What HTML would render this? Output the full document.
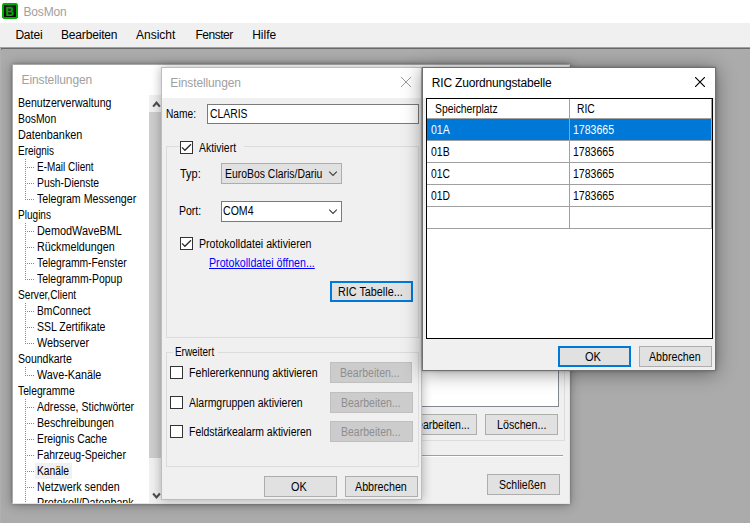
<!DOCTYPE html>
<html lang="de">
<head>
<meta charset="utf-8">
<title>BosMon</title>
<style>
html,body{margin:0;padding:0;background:#fff;}
#root{position:relative;width:750px;height:523px;overflow:hidden;background:#ababab;font-family:"Liberation Sans",sans-serif;}
#root div,#root span,#root svg{position:absolute;box-sizing:border-box;}
.t{white-space:pre;color:#000;}
.s11{font-size:12px;line-height:14px;transform-origin:0 0;}
.s12{font-size:12px;line-height:14px;}
.btn{background:#e1e1e1;border:1px solid #adadad;}
.btn.def{border:2px solid #0078d7;}
.btn.dis{background:#cccccc;border:1px solid #bfbfbf;}
.grp{border:1px solid #dcdcdc;}
.cb{width:13px;height:13px;background:#fff;border:1px solid #333;}
.hl{background:#a0a0a0;height:1px;}
.vl{background:#a0a0a0;width:1px;}
.dot-v{width:1px;background-image:repeating-linear-gradient(to bottom,#8a8a8a 0,#8a8a8a 1px,transparent 1px,transparent 2px);}
.dot-h{height:1px;background-image:repeating-linear-gradient(to right,#8a8a8a 0,#8a8a8a 1px,transparent 1px,transparent 2px);}
</style>
</head>
<body>
<div id="root">
  <!-- main window title bar + menu -->
  <div id="titlebar" style="left:0;top:0;width:750px;height:23px;background:#fff;"></div>
  <svg id="appicon" style="left:2px;top:3px;" width="16" height="16" viewBox="0 0 16 16">
    <defs><radialGradient id="ig" cx="50%" cy="25%" r="70%"><stop offset="0" stop-color="#3c2c3c"/><stop offset="1" stop-color="#0c060c"/></radialGradient></defs>
    <path d="M1.5 0 H14.5 L16 1.5 V14.5 L14.5 16 H1.5 L0 14.5 V1.5 Z" fill="#00ae00"/>
    <rect x="2" y="2" width="12" height="12" fill="url(#ig)"/>
    <text x="7.8" y="12.6" text-anchor="middle" font-family="Liberation Sans, sans-serif" font-weight="bold" font-size="12" fill="#00a800">B</text>
  </svg>
  <div id="menubar" style="left:0;top:23px;width:750px;height:24px;background:#f0f0f0;"></div>
  <div id="mdi" style="left:0;top:47px;width:750px;height:476px;background:#ababab;border-top:1px solid #a0a0a0;border-left:1px solid #b0b0b0;">
    <div style="left:0;top:0;width:749px;height:1px;background:#696969;"></div>
    <div style="left:0;top:1px;width:1px;height:1px;background:#808080;"></div>
  </div>

  <!-- left window -->
  <div id="winL" style="left:12px;top:64px;width:558px;height:440px;background:#fff;box-shadow:0 0 3px rgba(0,0,0,.25),0 1px 11px rgba(0,0,0,.33);border:1px solid #e4e4e4;border-top-color:#a8a8a8;border-left-color:#a8a8a8;"></div>
  <div id="winLbody" style="left:162px;top:94px;width:407px;height:409px;background:#f0f0f0;"></div>
  <div id="tree" style="left:13px;top:94px;width:136px;height:409px;overflow:hidden;background:#fff;">
    <div style="left:0;top:0;width:136px;height:430px;" id="treeinner"></div>
  </div>
  <!-- tree selection highlight -->
  <div id="treesel" style="left:35px;top:463px;width:37px;height:16px;background:#f0f0f0;"></div>
  <!-- tree dotted lines -->
  <!-- scrollbar -->
  <div id="sb" style="left:149px;top:95px;width:13px;height:408px;background:#f0f0f0;"></div>
  <div id="sbthumb" style="left:149px;top:112px;width:13px;height:346px;background:#cdcdcd;"></div>
  <svg style="left:149px;top:95px;" width="13" height="17" viewBox="0 0 13 17"><path d="M4.1 11.6 L7.5 7.7 L10.9 11.6" fill="none" stroke="#4d4d4d" stroke-width="2.1"/></svg>
  <svg style="left:149px;top:487px;" width="13" height="17" viewBox="0 0 13 17"><path d="M4.1 6.5 L7.5 10.4 L10.9 6.5" fill="none" stroke="#4d4d4d" stroke-width="2.1"/></svg>
  <!-- left window right content -->
  <div class="grp" style="left:400px;top:300px;width:165px;height:141px;"></div>
  <div style="left:400px;top:300px;width:159px;height:107px;background:#fff;border:1px solid #828790;"></div>
  <div class="btn" style="left:404px;top:414px;width:73px;height:21px;"></div>
  <div class="btn" style="left:485px;top:414px;width:73px;height:21px;"></div>
  <div style="left:400px;top:455px;width:163px;height:1px;background:#a0a0a0;"></div>
  <div style="left:400px;top:456px;width:163px;height:1px;background:#fff;"></div>
  <div class="btn" style="left:487px;top:474px;width:73px;height:21px;"></div>

<span class="t s12" style="left:21.50px;top:73px;letter-spacing:-0.115px;color:#a0a0a0;">Einstellungen</span>
<span class="t s11" style="left:410.30px;top:418px;transform:scaleX(0.8773);">Bearbeiten...</span>
<span class="t s11" style="left:496.50px;top:418px;transform:scaleX(0.8939);">Löschen...</span>
<span class="t s11" style="left:499.40px;top:478px;transform:scaleX(0.8769);">Schließen</span>
<div id="treetext" style="left:0;top:94px;width:149px;height:409px;overflow:hidden;">
<div style="left:0;top:-94px;width:149px;height:523px;">
<div class="dot-v" style="left:25px;top:159px;height:41px;"></div>
<div class="dot-h" style="left:25px;top:167px;width:9px;"></div>
<div class="dot-h" style="left:25px;top:183px;width:9px;"></div>
<div class="dot-h" style="left:25px;top:199px;width:9px;"></div>
<div class="dot-v" style="left:25px;top:223px;height:57px;"></div>
<div class="dot-h" style="left:25px;top:231px;width:9px;"></div>
<div class="dot-h" style="left:25px;top:247px;width:9px;"></div>
<div class="dot-h" style="left:25px;top:263px;width:9px;"></div>
<div class="dot-h" style="left:25px;top:279px;width:9px;"></div>
<div class="dot-v" style="left:25px;top:303px;height:41px;"></div>
<div class="dot-h" style="left:25px;top:311px;width:9px;"></div>
<div class="dot-h" style="left:25px;top:327px;width:9px;"></div>
<div class="dot-h" style="left:25px;top:343px;width:9px;"></div>
<div class="dot-v" style="left:25px;top:367px;height:9px;"></div>
<div class="dot-h" style="left:25px;top:375px;width:9px;"></div>
<div class="dot-v" style="left:25px;top:399px;height:121px;"></div>
<div class="dot-h" style="left:25px;top:407px;width:9px;"></div>
<div class="dot-h" style="left:25px;top:423px;width:9px;"></div>
<div class="dot-h" style="left:25px;top:439px;width:9px;"></div>
<div class="dot-h" style="left:25px;top:455px;width:9px;"></div>
<div class="dot-h" style="left:25px;top:471px;width:9px;"></div>
<div class="dot-h" style="left:25px;top:487px;width:9px;"></div>
<div class="dot-h" style="left:25px;top:503px;width:9px;"></div>
<div class="dot-h" style="left:25px;top:519px;width:9px;"></div>
<span class="t s11" style="left:18.20px;top:96px;transform:scaleX(0.8806);">Benutzerverwaltung</span>
<span class="t s11" style="left:18.20px;top:112px;transform:scaleX(0.8674);">BosMon</span>
<span class="t s11" style="left:18.20px;top:128px;transform:scaleX(0.9008);">Datenbanken</span>
<span class="t s11" style="left:18.20px;top:144px;transform:scaleX(0.8304);">Ereignis</span>
<span class="t s11" style="left:36.70px;top:160px;transform:scaleX(0.8314);">E-Mail Client</span>
<span class="t s11" style="left:36.70px;top:176px;transform:scaleX(0.8610);">Push-Dienste</span>
<span class="t s11" style="left:36.70px;top:192px;transform:scaleX(0.8853);">Telegram Messenger</span>
<span class="t s11" style="left:18.20px;top:208px;transform:scaleX(0.8385);">Plugins</span>
<span class="t s11" style="left:36.70px;top:224px;transform:scaleX(0.9062);">DemodWaveBML</span>
<span class="t s11" style="left:36.70px;top:240px;transform:scaleX(0.8960);">Rückmeldungen</span>
<span class="t s11" style="left:36.70px;top:256px;transform:scaleX(0.8613);">Telegramm-Fenster</span>
<span class="t s11" style="left:36.70px;top:272px;transform:scaleX(0.8692);">Telegramm-Popup</span>
<span class="t s11" style="left:18.20px;top:288px;transform:scaleX(0.8463);">Server,Client</span>
<span class="t s11" style="left:36.70px;top:304px;transform:scaleX(0.8570);">BmConnect</span>
<span class="t s11" style="left:36.70px;top:320px;transform:scaleX(0.8744);">SSL Zertifikate</span>
<span class="t s11" style="left:36.70px;top:336px;transform:scaleX(0.9014);">Webserver</span>
<span class="t s11" style="left:18.20px;top:352px;transform:scaleX(0.8784);">Soundkarte</span>
<span class="t s11" style="left:36.70px;top:368px;transform:scaleX(0.8983);">Wave-Kanäle</span>
<span class="t s11" style="left:18.20px;top:384px;transform:scaleX(0.8576);">Telegramme</span>
<span class="t s11" style="left:36.70px;top:400px;transform:scaleX(0.8771);">Adresse, Stichwörter</span>
<span class="t s11" style="left:36.70px;top:416px;transform:scaleX(0.8878);">Beschreibungen</span>
<span class="t s11" style="left:36.70px;top:432px;transform:scaleX(0.8605);">Ereignis Cache</span>
<span class="t s11" style="left:36.70px;top:448px;transform:scaleX(0.8711);">Fahrzeug-Speicher</span>
<span class="t s11" style="left:36.70px;top:464px;transform:scaleX(0.8570);">Kanäle</span>
<span class="t s11" style="left:36.70px;top:480px;transform:scaleX(0.8920);">Netzwerk senden</span>
<span class="t s11" style="left:36.70px;top:496px;transform:scaleX(0.8949);">Protokoll/Datenbank</span>
</div>
</div>

  <!-- middle dialog -->
  <div id="winM" style="left:161px;top:67px;width:261px;height:433px;background:#f0f0f0;box-shadow:0 0 10px rgba(0,0,0,.3);border:1px solid #bdbdbd;"></div>
  <div id="winMtitle" style="left:162px;top:68px;width:259px;height:30px;background:#fff;"></div>
  <svg style="left:401px;top:77px;" width="10" height="10" viewBox="0 0 10 10"><path d="M0 0 L10 10 M10 0 L0 10" stroke="#999" stroke-width="1" fill="none"/></svg>
  <div style="left:207px;top:104px;width:212px;height:20px;background:#fff;border:1px solid #7a7a7a;"></div>
  <div class="grp" style="left:166px;top:146px;width:253px;height:192px;"></div>
  <div style="left:180px;top:140px;width:64px;height:14px;background:#f0f0f0;"></div>
  <div class="cb" style="left:180px;top:141px;"></div>
  <svg style="left:180px;top:141px;" width="13" height="13" viewBox="0 0 13 13"><path d="M2 6.4 L4.9 9.3 L11 3.2" fill="none" stroke="#2a2a2a" stroke-width="1.25"/></svg>
  <div class="btn" style="left:221px;top:163px;width:121px;height:21px;"></div>
  <svg style="left:328px;top:170px;" width="10" height="8" viewBox="0 0 10 8"><path d="M1.2 1.7 L5 5.5 L8.8 1.7" fill="none" stroke="#3c3c3c" stroke-width="1.1"/></svg>
  <div style="left:221px;top:201px;width:121px;height:21px;background:#fff;border:1px solid #7a7a7a;"></div>
  <svg style="left:328px;top:208px;" width="10" height="8" viewBox="0 0 10 8"><path d="M1.2 1.7 L5 5.5 L8.8 1.7" fill="none" stroke="#3c3c3c" stroke-width="1.1"/></svg>
  <div class="cb" style="left:180px;top:237px;"></div>
  <svg style="left:180px;top:237px;" width="13" height="13" viewBox="0 0 13 13"><path d="M2 6.4 L4.9 9.3 L11 3.2" fill="none" stroke="#2a2a2a" stroke-width="1.25"/></svg>
  <div class="btn def" style="left:330px;top:281px;width:83px;height:21px;"></div>
  <div class="grp" style="left:166px;top:352px;width:253px;height:115px;"></div>
  <div style="left:173px;top:346px;width:45px;height:12px;background:#f0f0f0;"></div>
  <div class="cb" style="left:170px;top:366px;"></div>
  <div class="cb" style="left:170px;top:396px;"></div>
  <div class="cb" style="left:170px;top:425px;"></div>
  <div class="btn dis" style="left:330px;top:362px;width:82px;height:21px;"></div>
  <div class="btn dis" style="left:330px;top:392px;width:83px;height:21px;"></div>
  <div class="btn dis" style="left:330px;top:421px;width:83px;height:21px;"></div>
  <div class="btn" style="left:264px;top:476px;width:73px;height:21px;"></div>
  <div class="btn" style="left:345px;top:476px;width:73px;height:21px;"></div>

  <!-- RIC dialog -->
  <div id="winR" style="left:422px;top:67px;width:294px;height:304px;background:#f0f0f0;box-shadow:0 2px 18px rgba(0,0,0,.42),0 0 3px rgba(0,0,0,.25);border:1px solid #707070;"></div>
  <div id="winRtitle" style="left:423px;top:68px;width:292px;height:30px;background:#fff;"></div>
  <svg style="left:695px;top:77px;" width="10" height="10" viewBox="0 0 10 10"><path d="M0 0 L10 10 M10 0 L0 10" stroke="#000" stroke-width="1.15" fill="none"/></svg>
  <div id="grid" style="left:426px;top:98px;width:287px;height:241px;background:#fff;border:1px solid #000;"></div>
  <div style="left:427px;top:119px;width:285px;height:21px;background:#0078d7;"></div>
  <div class="hl" style="left:427px;top:118px;width:285px;"></div>
  <div class="hl" style="left:427px;top:140px;width:285px;"></div>
  <div class="hl" style="left:427px;top:162px;width:285px;"></div>
  <div class="hl" style="left:427px;top:184px;width:285px;"></div>
  <div class="hl" style="left:427px;top:206px;width:285px;"></div>
  <div class="hl" style="left:427px;top:228px;width:285px;"></div>
  <div class="vl" style="left:569px;top:99px;height:130px;"></div>
  <div class="vl" style="left:711px;top:99px;height:130px;"></div>
  <div class="btn def" style="left:558px;top:346px;width:73px;height:21px;"></div>
  <div class="btn" style="left:639px;top:346px;width:73px;height:21px;"></div>

<span class="t s12" style="left:23.50px;top:5px;letter-spacing:-0.170px;color:#a0a0a0;">BosMon</span>
<span class="t s12" style="left:15.40px;top:28px;letter-spacing:-0.187px;">Datei</span>
<span class="t s12" style="left:61.00px;top:28px;letter-spacing:-0.174px;">Bearbeiten</span>
<span class="t s12" style="left:136.00px;top:28px;letter-spacing:-0.003px;">Ansicht</span>
<span class="t s12" style="left:195.40px;top:28px;letter-spacing:-0.481px;">Fenster</span>
<span class="t s12" style="left:252.20px;top:28px;letter-spacing:0.017px;">Hilfe</span>
<span class="t s12" style="left:170.30px;top:76px;letter-spacing:-0.115px;color:#a0a0a0;">Einstellungen</span>
<span class="t s11" style="left:166.30px;top:107px;transform:scaleX(0.8483);">Name:</span>
<span class="t s11" style="left:210.00px;top:107px;transform:scaleX(0.8652);">CLARIS</span>
<span class="t s11" style="left:198.70px;top:141px;transform:scaleX(0.8676);">Aktiviert</span>
<span class="t s11" style="left:180.20px;top:167px;transform:scaleX(0.9131);">Typ:</span>
<span class="t s11" style="left:225.30px;top:167px;transform:scaleX(0.8683);">EuroBos Claris/Dariu</span>
<span class="t s11" style="left:178.70px;top:204px;transform:scaleX(0.8757);">Port:</span>
<span class="t s11" style="left:223.00px;top:204px;transform:scaleX(0.8801);">COM4</span>
<span class="t s11" style="left:198.70px;top:237px;transform:scaleX(0.8830);">Protokolldatei aktivieren</span>
<span class="t s11" style="left:209.30px;top:256px;transform:scaleX(0.8876);color:#0000ff;text-decoration:underline;">Protokolldatei öffnen...</span>
<span class="t s11" style="left:337.80px;top:285px;transform:scaleX(0.9010);">RIC Tabelle...</span>
<span class="t s11" style="left:175.30px;top:345px;transform:scaleX(0.8269);">Erweitert</span>
<span class="t s11" style="left:189.00px;top:366px;transform:scaleX(0.8843);">Fehlererkennung aktivieren</span>
<span class="t s11" style="left:189.00px;top:396px;transform:scaleX(0.8733);">Alarmgruppen aktivieren</span>
<span class="t s11" style="left:189.00px;top:425px;transform:scaleX(0.8711);">Feldstärkealarm aktivieren</span>
<span class="t s11" style="left:340.30px;top:366px;transform:scaleX(0.8758);color:#8e8e8e;">Bearbeiten...</span>
<span class="t s11" style="left:341.20px;top:396px;transform:scaleX(0.8758);color:#8e8e8e;">Bearbeiten...</span>
<span class="t s11" style="left:341.20px;top:425px;transform:scaleX(0.8758);color:#8e8e8e;">Bearbeiten...</span>
<span class="t s11" style="left:291.30px;top:480px;transform:scaleX(0.9057);">OK</span>
<span class="t s11" style="left:355.00px;top:480px;transform:scaleX(0.8925);">Abbrechen</span>
<span class="t s12" style="left:431.80px;top:76px;letter-spacing:-0.177px;">RIC Zuordnungstabelle</span>
<span class="t s11" style="left:435.40px;top:102px;transform:scaleX(0.8610);">Speicherplatz</span>
<span class="t s11" style="left:577.40px;top:102px;transform:scaleX(0.8600);">RIC</span>
<span class="t s11" style="left:430.90px;top:123px;transform:scaleX(0.8760);color:#fff;">01A</span>
<span class="t s11" style="left:573.40px;top:123px;transform:scaleX(0.8779);color:#fff;">1783665</span>
<span class="t s11" style="left:430.90px;top:145px;transform:scaleX(0.8760);">01B</span>
<span class="t s11" style="left:573.40px;top:145px;transform:scaleX(0.8779);">1783665</span>
<span class="t s11" style="left:430.90px;top:167px;transform:scaleX(0.8600);">01C</span>
<span class="t s11" style="left:573.40px;top:167px;transform:scaleX(0.8779);">1783665</span>
<span class="t s11" style="left:430.90px;top:189px;transform:scaleX(0.8600);">01D</span>
<span class="t s11" style="left:573.40px;top:189px;transform:scaleX(0.8779);">1783665</span>
<span class="t s11" style="left:585.20px;top:350px;transform:scaleX(0.9200);">OK</span>
<span class="t s11" style="left:649.00px;top:350px;transform:scaleX(0.8890);">Abbrechen</span>
</div>
</body>
</html>
